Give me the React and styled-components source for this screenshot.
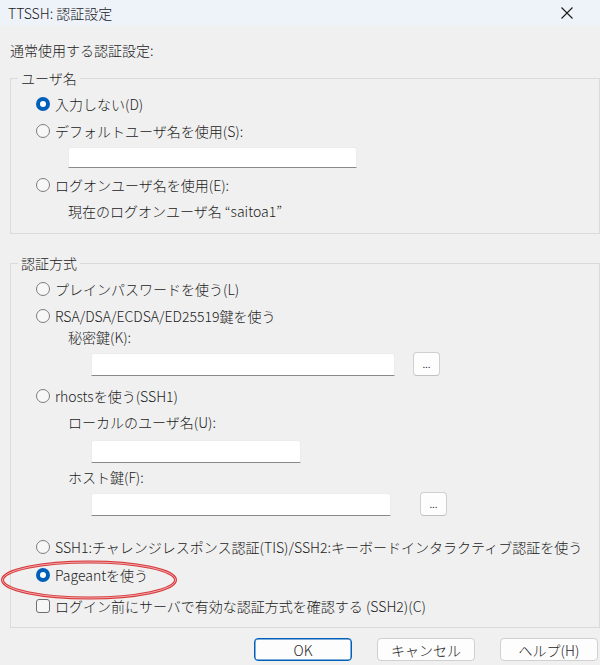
import React from "react";
import styled, { createGlobalStyle } from "styled-components";

const GlobalStyle = createGlobalStyle`
  html, body { margin: 0; padding: 0; background: #f0f0f0; }
  body {
    font-family: "Noto Sans CJK JP", "Noto Sans", sans-serif;
    font-size: 14px;
    font-weight: 300;
    color: #1b1b1b;
  }
  * { box-sizing: border-box; }
`;

const Window = styled.div`
  width: 600px;
  height: 665px;
  overflow: hidden;
  background: #f0f0f0;
  display: flex;
  flex-direction: column;
`;

const TitleBar = styled.div`
  height: 25px;
  flex: none;
  background: #eef3fa;
  display: flex;
  align-items: center;
  justify-content: space-between;
  padding: 0 27px 0 8px;
`;

const TitleText = styled.span`
  font-size: 14px;
  line-height: 20px;
  color: #1a1a1a;
`;

const Body = styled.div`
  padding: 0 0 0 10px;
  display: flex;
  flex-direction: column;
`;

const Heading = styled.div`
  margin-top: 15px;
  line-height: 20px;
  height: 20px;
`;

const Group = styled.fieldset`
  margin: ${(p) => p.$mt}px 0 0 0;
  padding: 0;
  border: 1px solid #dadada;
  min-width: 0;
`;

const Legend = styled.legend`
  margin-left: 7px;
  padding: 0 3px;
  line-height: 20px;
  height: 20px;
`;

const GroupContent = styled.div`
  display: flex;
  flex-direction: column;
  padding: 6px 0 ${(p) => p.$pb}px 25px;
`;

const Row = styled.div`
  position: relative;
  display: flex;
  align-items: center;
  gap: ${(p) => p.$gap ?? 5}px;
  min-height: 20px;
  margin-top: ${(p) => p.$mt || 0}px;
  padding-left: ${(p) => p.$indent || 0}px;
  line-height: 20px;
  white-space: nowrap;
`;

const RadioMark = styled.span`
  flex: none;
  width: 14px;
  height: 14px;
  border-radius: 50%;
  border: ${(p) => (p.$checked ? "none" : "1px solid #7d7d7d")};
  background: ${(p) => (p.$checked ? "#005fb8" : "#f7f7f7")};
  display: flex;
  align-items: center;
  justify-content: center;
  &::after {
    content: "";
    display: ${(p) => (p.$checked ? "block" : "none")};
    width: 6px;
    height: 6px;
    border-radius: 50%;
    background: #ffffff;
  }
`;

const CheckMark = styled.span`
  flex: none;
  width: 14px;
  height: 14px;
  border-radius: 3px;
  border: 1px solid #6e6e6e;
  background: #f7f7f7;
`;

const Label = styled.span`
  line-height: 20px;
`;

const TextBox = styled.div`
  flex: none;
  width: ${(p) => p.$w}px;
  height: ${(p) => p.$h || 23}px;
  background: #ffffff;
  border: 1px solid #ececec;
  border-bottom: 1px solid #8a8a8a;
  border-radius: 3px 3px 0 0;
`;

const BrowseButton = styled.div`
  flex: none;
  width: 27px;
  height: 24px;
  background: #fdfdfd;
  border: 1px solid #d0d0d0;
  border-bottom-color: #c0c0c0;
  border-radius: 4px;
  display: flex;
  align-items: center;
  justify-content: center;
  font-size: 11px;
  line-height: 1;
  padding-bottom: 2px;
`;

const ButtonBar = styled.div`
  display: flex;
  justify-content: flex-end;
  gap: 25px;
  margin-top: 10px;
  padding-right: 2px;
`;

const DialogButton = styled.div`
  width: 98px;
  height: 23px;
  border-radius: 4px;
  background: #fdfdfd;
  border: 1px solid ${(p) => (p.$primary ? "#005fb8" : "#d0d0d0")};
  box-shadow: ${(p) => (p.$primary ? "inset 0 0 0 0.5px #005fb8" : "none")};
  display: flex;
  align-items: center;
  justify-content: center;
  font-size: 14px;
  line-height: 20px;
`;

const Annotation = styled.svg`
  position: absolute;
  left: -35px;
  top: -4px;
  pointer-events: none;
  overflow: visible;
`;

const CloseIcon = () => (
  <svg width="12" height="12" viewBox="0 0 12 12">
    <path d="M0.5 0.5 L11.5 11.5 M11.5 0.5 L0.5 11.5" stroke="#1a1a1a" strokeWidth="1.1" fill="none" />
  </svg>
);

const Radio = ({ checked, children, mt }) => (
  <Row $mt={mt}>
    <RadioMark $checked={checked} />
    <Label>{children}</Label>
  </Row>
);

export default function App() {
  return (
    <>
      <GlobalStyle />
      <Window>
        <TitleBar>
          <TitleText>TTSSH: 認証設定</TitleText>
          <CloseIcon />
        </TitleBar>
        <Body>
          <Heading>通常使用する認証設定:</Heading>

          <Group $mt={8}>
            <Legend>ユーザ名</Legend>
            <GroupContent $pb={12}>
              <Radio checked>入力しない(D)</Radio>
              <Radio mt={7}>デフォルトユーザ名を使用(S):</Radio>
              <Row $mt={6} $indent={32}>
                <TextBox $w={289} $h={21} />
              </Row>
              <Radio mt={7}>ログオンユーザ名を使用(E):</Radio>
              <Row $mt={6} $indent={32}>
                <Label>現在のログオンユーザ名 “saitoa1”</Label>
              </Row>
            </GroupContent>
          </Group>

          <Group $mt={19}>
            <Legend>認証方式</Legend>
            <GroupContent $pb={11}>
              <Radio>プレインパスワードを使う(L)</Radio>
              <Radio mt={7}>RSA/DSA/ECDSA/ED25519鍵を使う</Radio>
              <Row $mt={1} $indent={32}>
                <Label>秘密鍵(K):</Label>
              </Row>
              <Row $mt={5} $indent={55} $gap={18}>
                <TextBox $w={304} />
                <BrowseButton>...</BrowseButton>
              </Row>
              <Radio mt={10}>rhostsを使う(SSH1)</Radio>
              <Row $mt={6} $indent={32}>
                <Label>ローカルのユーザ名(U):</Label>
              </Row>
              <Row $mt={8} $indent={55}>
                <TextBox $w={210} />
              </Row>
              <Row $mt={4} $indent={32}>
                <Label>ホスト鍵(F):</Label>
              </Row>
              <Row $mt={5} $indent={55} $gap={29}>
                <TextBox $w={300} />
                <BrowseButton>...</BrowseButton>
              </Row>
              <Radio mt={21}>SSH1:チャレンジレスポンス認証(TIS)/SSH2:キーボードインタラクティブ認証を使う</Radio>
              <Row $mt={8}>
                <RadioMark $checked />
                <Label>Pageantを使う</Label>
                <Annotation width="176" height="40" viewBox="0 0 176 40">
                  <ellipse cx="88" cy="19" rx="86.5" ry="18" fill="none" stroke="#d8373a" strokeWidth="3" />
                  <ellipse cx="88" cy="19" rx="86.5" ry="18" fill="none" stroke="#f6c9c9" strokeWidth="0.8" />
                </Annotation>
              </Row>
              <Row $mt={11}>
                <CheckMark />
                <Label>ログイン前にサーバで有効な認証方式を確認する (SSH2)(C)</Label>
              </Row>
            </GroupContent>
          </Group>

          <ButtonBar>
            <DialogButton $primary>OK</DialogButton>
            <DialogButton>キャンセル</DialogButton>
            <DialogButton>ヘルプ(H)</DialogButton>
          </ButtonBar>
        </Body>
      </Window>
    </>
  );
}
